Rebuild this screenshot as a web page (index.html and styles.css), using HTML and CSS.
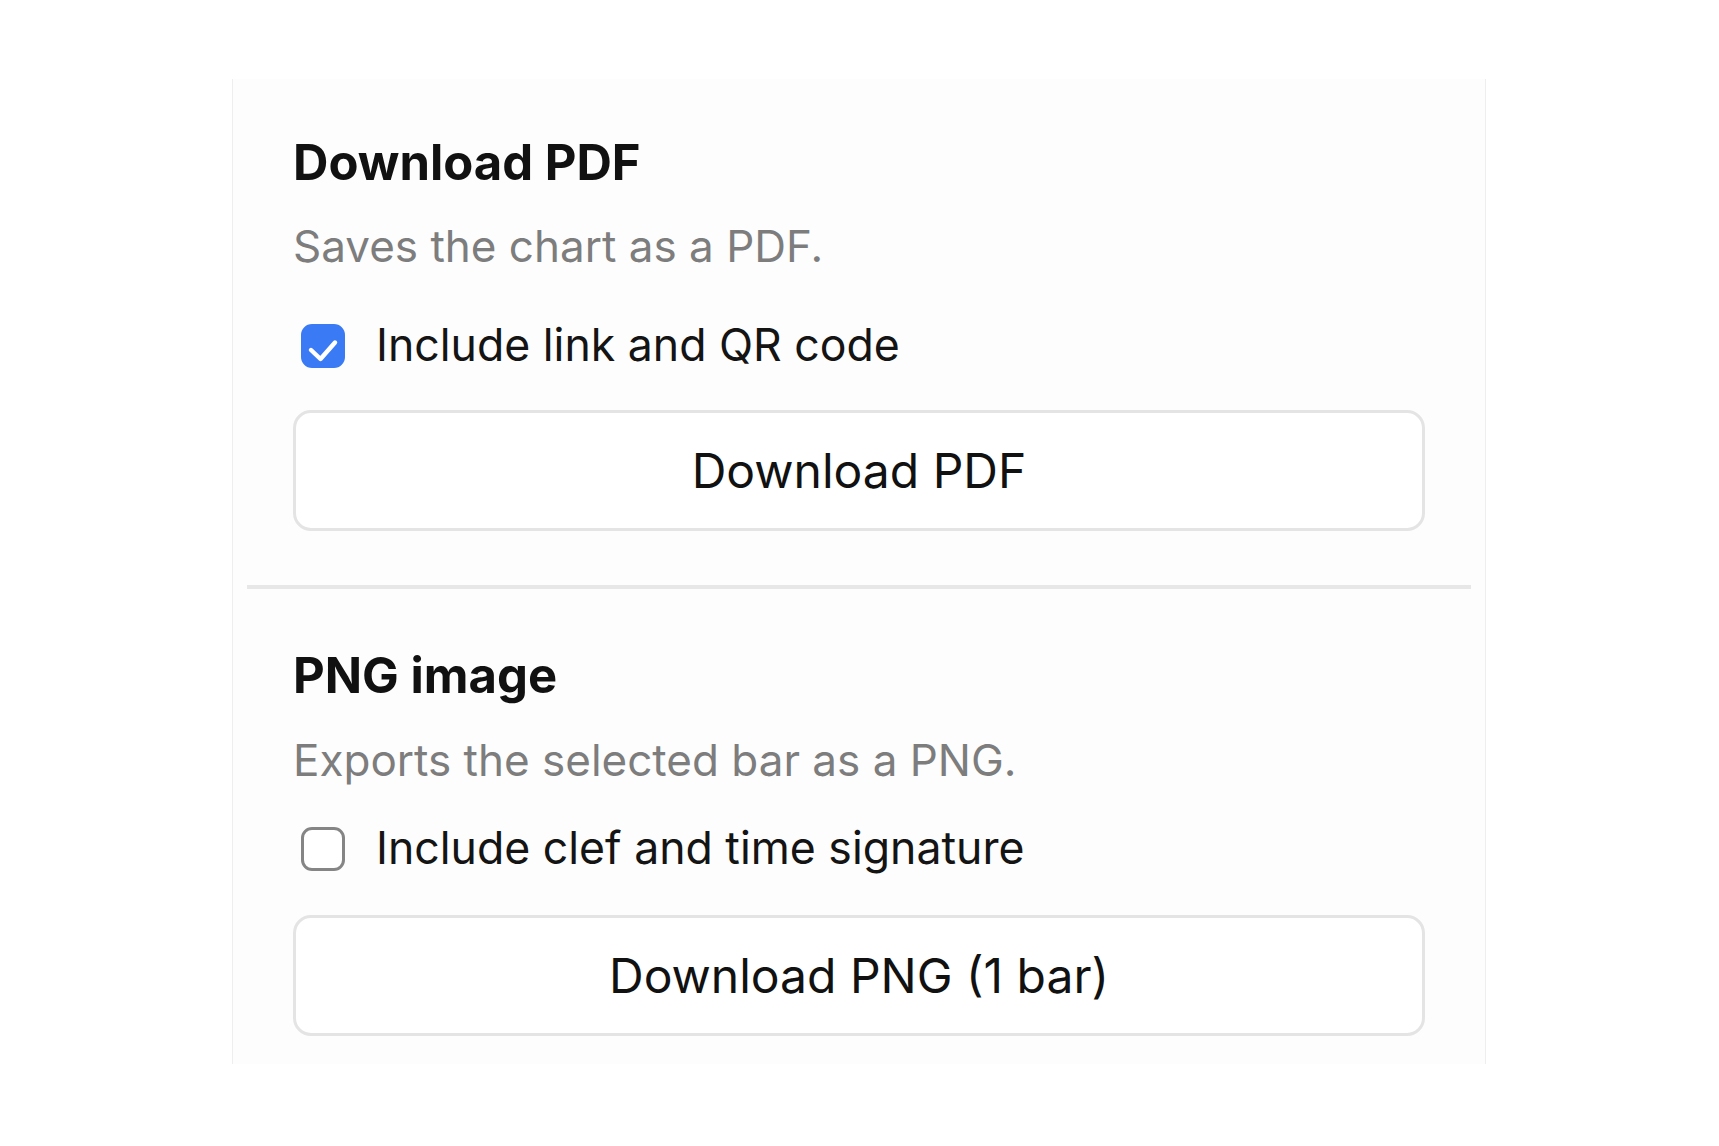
FILE: index.html
```html
<!DOCTYPE html>
<html lang="en">
<head>
<meta charset="utf-8">
<title>Export</title>
<link rel="stylesheet" href="styles.css">
</head>
<body>
<main class="panel">
  <section class="export export--pdf">
    <h2 class="export__title">Download PDF</h2>
    <p class="export__desc">Saves the chart as a PDF.</p>
    <label class="option">
      <span class="box box--checked">
        <svg class="box__tick" viewBox="0 0 44 44" width="44" height="44" aria-hidden="true"><path d="M10 26 L19.5 35 L34 18.5" fill="none" stroke="#fff" stroke-width="4.4" stroke-linecap="round" stroke-linejoin="round"/></svg>
      </span>
      <span class="option__text">Include link and QR code</span>
    </label>
    <button class="action" type="button">Download PDF</button>
  </section>
  <hr class="divider">
  <section class="export export--png">
    <h2 class="export__title">PNG image</h2>
    <p class="export__desc">Exports the selected bar as a PNG.</p>
    <label class="option">
      <span class="box"></span>
      <span class="option__text">Include clef and time signature</span>
    </label>
    <button class="action" type="button">Download PNG (1 bar)</button>
  </section>
</main>
</body>
</html>
```
FILE: styles.css
```css
html, body {
  margin: 0;
  background: #ffffff;
}

body {
  font-family: Inter, "Noto Sans", "Liberation Sans", sans-serif;
  color: #141414;
}

.panel {
  box-sizing: border-box;
  width: 1254px;
  margin: 79px 0 0 232px;
  padding: 55px 0 28px;
  background: #fdfdfd;
  border-left: 1px solid #eeeeee;
  border-right: 1px solid #eeeeee;
}

.export {
  display: flex;
  flex-direction: column;
  padding: 0 60px;
}

.export--png {
  padding-top: 58px;
}

.export__title {
  margin: 0;
  font-size: 49px;
  line-height: 58px;
  font-weight: 700;
  color: #111111;
}

.export__desc {
  margin: 28px 0 0;
  font-size: 44px;
  line-height: 53px;
  color: #7d7d7d;
}

.export--png .export__desc {
  margin-top: 29px;
}

.option {
  display: flex;
  align-items: center;
  gap: 31px;
  margin-top: 46px;
  height: 53px;
  padding-left: 8px;
}

.export--png .option {
  margin-top: 35px;
}

.box {
  box-sizing: border-box;
  width: 44px;
  height: 44px;
  flex: none;
  border-radius: 11px;
  border: 3px solid #858585;
  background: #ffffff;
}

.box--checked {
  background: #3a7bf5;
  border-color: #3a7bf5;
}

.box__tick {
  display: block;
  margin: -3px;
}

.option__text {
  font-size: 44.6px;
  line-height: 53px;
  color: #141414;
}

.action {
  box-sizing: border-box;
  margin-top: 38px;
  height: 121px;
  width: 100%;
  border: 3px solid #e4e4e4;
  border-radius: 18px;
  background: #ffffff;
  font-family: inherit;
  font-size: 48px;
  color: #111111;
  padding: 0;
}

.export--png .action {
  margin-top: 40px;
}

.divider {
  margin: 54px 14px 0;
  height: 4px;
  border: 0;
  background: #e7e7e7;
}
```
